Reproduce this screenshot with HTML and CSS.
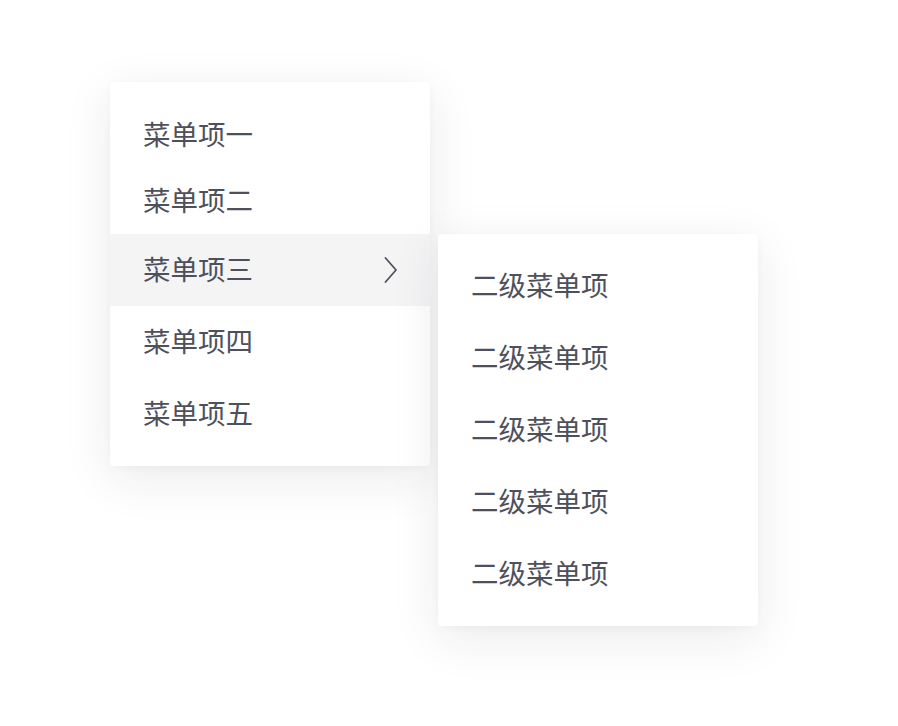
FILE: index.html
```html
<html lang="zh-CN">
<head>
    <meta charset="UTF-8">
    <meta name="viewport" content="width=device-width, initial-scale=1.0">
    <title>菜单</title>
    <link rel="stylesheet" href="styles.css">
</head>
<body>
    <main>
        <ul class="menu">
            <li class="item short">菜单项一</li>
            <li class="item short">菜单项二</li>
            <li class="item active has-sub">
                <span>菜单项三</span>
                <svg class="arrow" width="14" height="26" viewBox="0 0 14 26">
                    <polyline points="1.5,1 12,13 1.5,25" fill="none" stroke="currentColor" stroke-width="1.8" stroke-linecap="round" stroke-linejoin="round"/>
                </svg>
                <ul class="menu sub">
                    <li class="item">二级菜单项</li>
                    <li class="item">二级菜单项</li>
                    <li class="item">二级菜单项</li>
                    <li class="item">二级菜单项</li>
                    <li class="item">二级菜单项</li>
                </ul>
            </li>
            <li class="item">菜单项四</li>
            <li class="item">菜单项五</li>
        </ul>
    </main>
</body>
</html>
```

FILE: styles.css
```css
* {
    box-sizing: border-box;
    --color-bg:#FFFFFF;
    --color-hover:#F4F4F5;
    --color-text:#4E505C;
}
body{
    margin: 0;
    background-color: var(--color-bg);
    color: var(--color-text);
    font-family: "Noto Sans CJK SC", "Noto Sans", sans-serif;
}
main{
    padding: 82px 0 0 110px;
}
.menu{
    list-style: none;
    margin: 0;
    padding: 16px 0;
    width: 320px;
    background-color: var(--color-bg);
    border-radius: 4px;
    box-shadow: 0 12px 50px rgba(30, 30, 50, 0.09), 0 2px 10px rgba(30, 30, 50, 0.03);
    &:not(.sub){
        padding-top: 20px;
    }
}
.item{
    display: flex;
    align-items: center;
    justify-content: space-between;
    height: 72px;
    padding: 0 32px 3px 33px;
    font-size: 27.5px;
    line-height: 1;
    &.short{
        height: 66px;
    }
    &.active{
        background-color: var(--color-hover);
    }
}
.has-sub{
    position: relative;
    & .arrow{
        display: block;
        margin-top: 3px;
    }
}
.sub{
    position: absolute;
    top: 0;
    left: calc(100% + 8px);
}
```
